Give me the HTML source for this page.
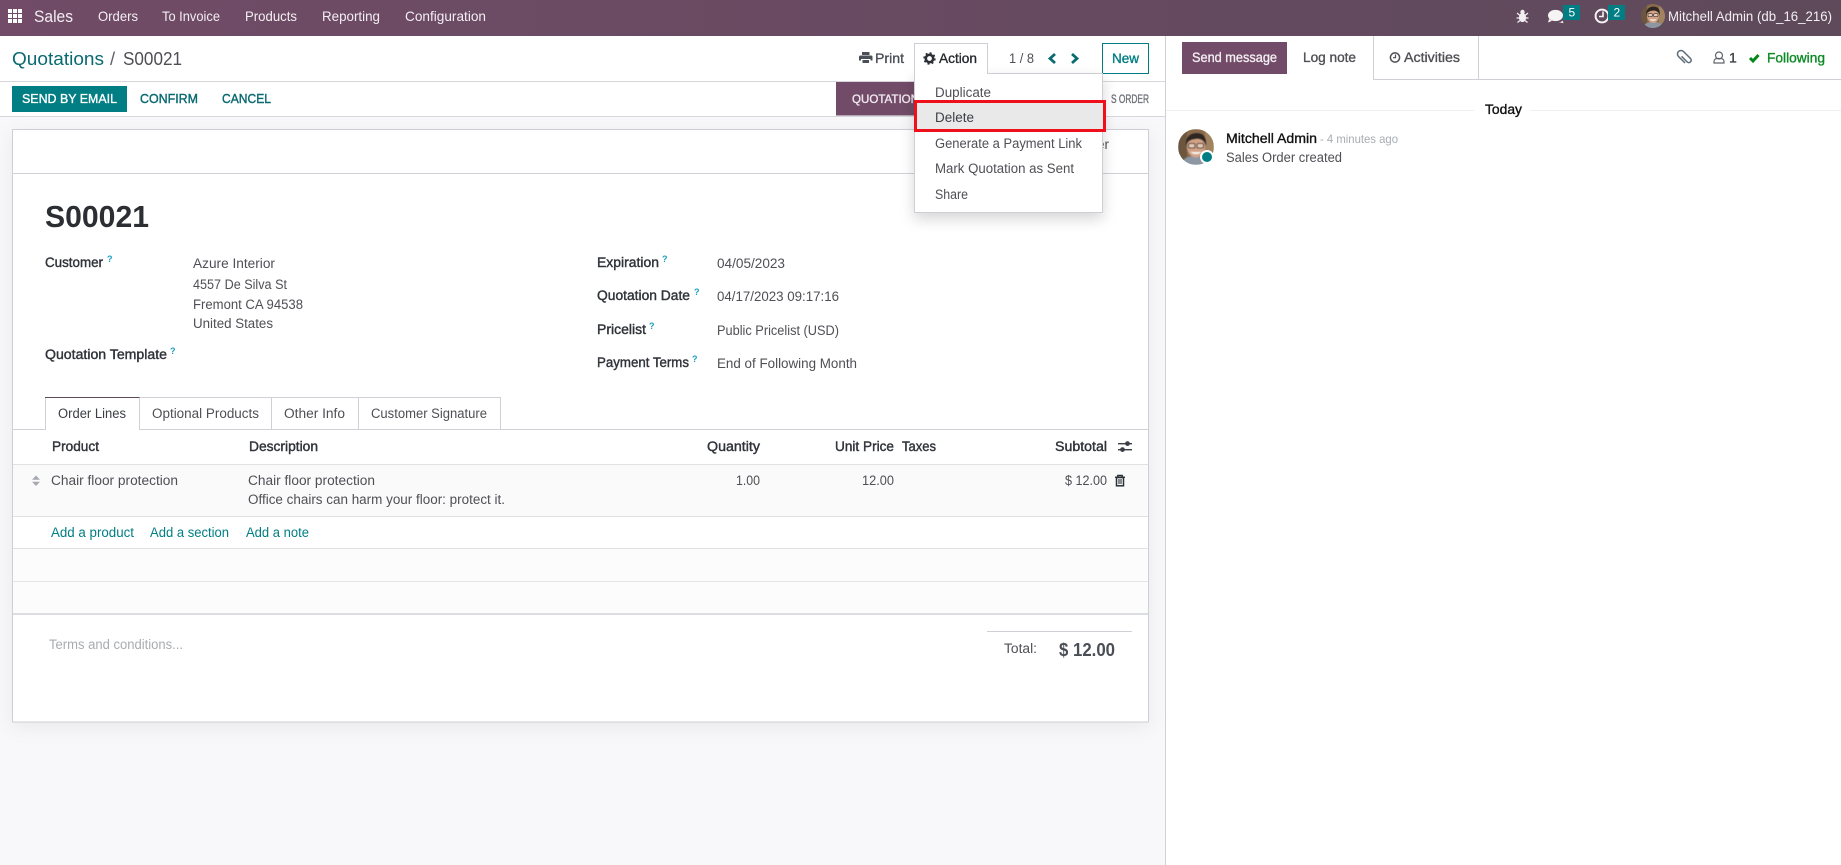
<!DOCTYPE html>
<html lang="en"><head><meta charset="utf-8"><title>S00021</title>
<style>
html,body{margin:0;padding:0;background:#fff;width:1841px;height:865px;overflow:hidden}
svg{display:block}
text{font-family:"Liberation Sans",sans-serif;font-size:13.5px;fill:#4f4f55;white-space:pre}
.nav{fill:#f3eef2;font-size:14px}
.b{fill:#30343a;stroke:#30343a;stroke-width:.4px}
.m{stroke-width:.35px}
.teal{fill:#017e84}
.tb{fill:#0a6a72;stroke:#0a6a72;stroke-width:.4px}
.q{font-size:9px;fill:#1a9fc0;font-weight:bold}
</style></head><body>
<svg width="1841" height="865" viewBox="0 0 1841 865" xmlns="http://www.w3.org/2000/svg">
<defs>
<linearGradient id="g" x1="0" x2="1" y1="0" y2="0"><stop offset="0" stop-color="#714b67"/><stop offset="1" stop-color="#5e4a5b"/></linearGradient>
<filter id="sh" x="-20%" y="-20%" width="140%" height="140%"><feDropShadow dx="0" dy="6" stdDeviation="7" flood-color="#000" flood-opacity=".16"/></filter>
<filter id="sh2" x="-5%" y="-5%" width="110%" height="110%"><feDropShadow dx="0" dy="5" stdDeviation="9" flood-color="#000" flood-opacity=".06"/></filter>
<filter id="bl"><feGaussianBlur stdDeviation=".55"/></filter>
<clipPath id="av"><circle cx="18" cy="18" r="18"/></clipPath>
<symbol id="face" viewBox="0 0 36 36">
<g clip-path="url(#av)"><g filter="url(#bl)">
<rect width="36" height="36" fill="#8a6a4c"/>
<rect x="0" y="0" width="9" height="36" fill="#6d5640"/>
<rect x="27" y="0" width="9" height="36" fill="#a2835f"/>
<path d="M3 36 C5 28 12 27 18 27 C25 27 31 28 33 36Z" fill="#8d97a3"/>
<ellipse cx="18" cy="17.5" rx="9" ry="11" fill="#d3a286"/>
<path d="M8 17 C7 7 13 4 19 4 C26 4 29 9 28 17 C26 11 22 9.5 18 10 C14 10.5 10 11 8 17Z" fill="#2e2620"/>
<rect x="10.5" y="14.5" width="6.5" height="4.5" rx="1.5" fill="#e3c9b8" stroke="#38302a" stroke-width="1"/>
<rect x="19" y="14.5" width="6.5" height="4.5" rx="1.5" fill="#e3c9b8" stroke="#38302a" stroke-width="1"/>
<path d="M12.5 23 C15 26 21 26 23.5 23Z" fill="#f6efe9"/>
</g></g></symbol>
</defs>

<!-- base -->
<rect width="1841" height="865" fill="#f8f8fb"/>
<rect x="0" y="36" width="1165" height="80" fill="#fff"/>
<rect x="1166" y="36" width="675" height="829" fill="#fff"/>
<rect x="0" y="0" width="1841" height="36" fill="url(#g)"/>
<rect x="0" y="81" width="1165" height="1" fill="#d5d7da"/>
<rect x="0" y="116" width="1165" height="1" fill="#d5d7da"/>
<rect x="1165" y="36" width="1" height="829" fill="#cfd1d6"/>

<!-- navbar -->
<g fill="#fff">
<rect x="8" y="9" width="4" height="4"/><rect x="13" y="9" width="4" height="4"/><rect x="18" y="9" width="4" height="4"/>
<rect x="8" y="14" width="4" height="4"/><rect x="13" y="14" width="4" height="4"/><rect x="18" y="14" width="4" height="4"/>
<rect x="8" y="19" width="4" height="4"/><rect x="13" y="19" width="4" height="4"/><rect x="18" y="19" width="4" height="4"/>
</g>
<text class="nav" x="34" y="22" style="font-size:17px" textLength="39" lengthAdjust="spacingAndGlyphs">Sales</text>
<text class="nav" x="98" y="21" textLength="40" lengthAdjust="spacingAndGlyphs">Orders</text>
<text class="nav" x="162" y="21" textLength="58" lengthAdjust="spacingAndGlyphs">To Invoice</text>
<text class="nav" x="245" y="21" textLength="52" lengthAdjust="spacingAndGlyphs">Products</text>
<text class="nav" x="322" y="21" textLength="58" lengthAdjust="spacingAndGlyphs">Reporting</text>
<text class="nav" x="405" y="21" textLength="81" lengthAdjust="spacingAndGlyphs">Configuration</text>

<!-- bug -->
<g fill="#f2eef1" stroke="#f2eef1">
<ellipse cx="1522.5" cy="17.5" rx="3.6" ry="4.6" stroke="none"/>
<circle cx="1522.5" cy="12" r="2.2" stroke="none"/>
<path d="M1517 13l3 2.5M1528 13l-3 2.5M1516.5 18h3M1528.5 18h-3M1517.5 22.5l2.5-2M1527.5 22.5l-2.5-2" fill="none" stroke-width="1.2"/>
</g>
<!-- comments -->
<ellipse cx="1555.5" cy="15.5" rx="7.5" ry="5.6" fill="#f6f3f5"/>
<path d="M1549 19l-1 3.5 4-1.6Z" fill="#f6f3f5"/>
<path d="M1557 22.5c2.5.2 4.5-.5 5.5-2l1 2.8-3.2-.8Z" fill="#f6f3f5"/>
<rect x="1563" y="5" width="17" height="15" fill="#017e84"/>
<text x="1568.5" y="16.5" style="font-size:12px;fill:#fff">5</text>
<!-- clock -->
<circle cx="1602" cy="16" r="6.4" fill="none" stroke="#f6f3f5" stroke-width="2"/>
<path d="M1603 11.5v5h-4" fill="none" stroke="#f6f3f5" stroke-width="1.6"/>
<rect x="1608" y="5" width="17" height="15" fill="#017e84"/>
<text x="1613.5" y="16.5" style="font-size:12px;fill:#fff">2</text>
<!-- user -->
<use href="#face" x="1641" y="4" width="24" height="24"/>
<text class="nav" x="1668" y="21" textLength="164" lengthAdjust="spacingAndGlyphs">Mitchell Admin (db_16_216)</text>

<!-- control panel -->
<text x="12" y="65" style="font-size:18.5px;fill:#0a6a72" textLength="92" lengthAdjust="spacingAndGlyphs">Quotations</text>
<text x="110" y="65" style="font-size:18.5px;fill:#5f6368">/</text>
<text x="123" y="65" style="font-size:18.5px;fill:#4f4f55" textLength="59" lengthAdjust="spacingAndGlyphs">S00021</text>

<path d="M862 52h7.5v3h-7.5Z M860.5 55.5h10.5a1.5 1.5 0 0 1 1.5 1.5v3.5h-2v-1.5h-9.5v1.5h-2v-3.5a1.5 1.5 0 0 1 1.5-1.5Z M862.5 60h6.5v3h-6.5Z" fill="#4a4f57"/>
<text class="m" x="875" y="63" style="fill:#4a4f57;stroke:#4a4f57;font-size:14px" textLength="29" lengthAdjust="spacingAndGlyphs">Print</text>

<text x="1009" y="63" textLength="25" lengthAdjust="spacingAndGlyphs">1 / 8</text>
<path d="M1055 54l-5 4.5 5 4.5" fill="none" stroke="#0a6a72" stroke-width="2.8"/>
<path d="M1072 54l5 4.5-5 4.5" fill="none" stroke="#0a6a72" stroke-width="2.8"/>
<rect x="1102.5" y="43.5" width="46" height="30" fill="#fff" stroke="#017e84"/>
<text class="m" x="1112" y="63" style="fill:#017e84;stroke:#017e84" textLength="27" lengthAdjust="spacingAndGlyphs">New</text>

<!-- action row -->
<rect x="12" y="86" width="115" height="26" fill="#017e84"/>
<text class="m" x="22" y="103" style="fill:#fff;stroke:#fff;font-size:13px" textLength="95" lengthAdjust="spacingAndGlyphs">SEND BY EMAIL</text>
<text class="tb" x="140" y="103" style="font-size:13px" textLength="58" lengthAdjust="spacingAndGlyphs">CONFIRM</text>
<text class="tb" x="222" y="103" style="font-size:13px" textLength="49" lengthAdjust="spacingAndGlyphs">CANCEL</text>

<!-- status -->
<rect x="836" y="82" width="110" height="33.5" fill="#714b67"/>
<text class="m" x="852" y="103" style="fill:#f1e9ef;stroke:#f1e9ef;font-size:11.5px" textLength="67" lengthAdjust="spacingAndGlyphs">QUOTATION</text>
<text class="m" x="1111" y="103" style="fill:#6c7077;stroke:#6c7077;font-size:11.5px" textLength="38" lengthAdjust="spacingAndGlyphs">S ORDER</text>

<!-- sheet -->
<rect x="12.5" y="129.5" width="1136" height="592.5" fill="#fff" stroke="#cdcfd4" filter="url(#sh2)"/>
<rect x="13" y="173" width="1135" height="1" fill="#cfd1d6"/>
<text x="1097" y="149" style="font-size:14px" textLength="12" lengthAdjust="spacingAndGlyphs">er</text>

<text x="45" y="227" style="font-size:31px;font-weight:bold;fill:#2b2f33" textLength="104" lengthAdjust="spacingAndGlyphs">S00021</text>

<text class="b" x="45" y="267" textLength="58" lengthAdjust="spacingAndGlyphs">Customer</text>
<text class="q" x="107" y="262">?</text>
<text x="193" y="268" textLength="82" lengthAdjust="spacingAndGlyphs">Azure Interior</text>
<text x="193" y="289" textLength="94" lengthAdjust="spacingAndGlyphs">4557 De Silva St</text>
<text x="193" y="309" textLength="110" lengthAdjust="spacingAndGlyphs">Fremont CA 94538</text>
<text x="193" y="328" textLength="80" lengthAdjust="spacingAndGlyphs">United States</text>
<text class="b" x="45" y="359" textLength="122" lengthAdjust="spacingAndGlyphs">Quotation Template</text>
<text class="q" x="170" y="354">?</text>

<text class="b" x="597" y="267" textLength="62" lengthAdjust="spacingAndGlyphs">Expiration</text>
<text class="q" x="662" y="262">?</text>
<text x="717" y="268" textLength="68" lengthAdjust="spacingAndGlyphs">04/05/2023</text>
<text class="b" x="597" y="300" textLength="93" lengthAdjust="spacingAndGlyphs">Quotation Date</text>
<text class="q" x="694" y="295">?</text>
<text x="717" y="301" textLength="122" lengthAdjust="spacingAndGlyphs">04/17/2023 09:17:16</text>
<text class="b" x="597" y="334" textLength="49" lengthAdjust="spacingAndGlyphs">Pricelist</text>
<text class="q" x="649" y="329">?</text>
<text x="717" y="335" textLength="122" lengthAdjust="spacingAndGlyphs">Public Pricelist (USD)</text>
<text class="b" x="597" y="367" textLength="92" lengthAdjust="spacingAndGlyphs">Payment Terms</text>
<text class="q" x="692" y="362">?</text>
<text x="717" y="368" textLength="140" lengthAdjust="spacingAndGlyphs">End of Following Month</text>

<!-- tabs -->
<rect x="13" y="429" width="1135" height="1" fill="#cfd1d6"/>
<path d="M45.5 430V397.5H139.5V430" fill="#fff" stroke="#cfd1d6"/>
<rect x="46" y="429" width="93" height="2" fill="#fff"/>
<rect x="45" y="397" width="95" height="1" fill="#5f4a5b"/>
<path d="M139.5 397.5H500.5V429.5M271.5 397.5V429.5M358.5 397.5V429.5" fill="none" stroke="#cfd1d6"/>
<text x="58" y="418" style="fill:#3b3f45" textLength="68" lengthAdjust="spacingAndGlyphs">Order Lines</text>
<text x="152" y="418" textLength="107" lengthAdjust="spacingAndGlyphs">Optional Products</text>
<text x="284" y="418" textLength="61" lengthAdjust="spacingAndGlyphs">Other Info</text>
<text x="371" y="418" textLength="116" lengthAdjust="spacingAndGlyphs">Customer Signature</text>

<!-- table -->
<rect x="13" y="465" width="1135" height="51" fill="#fafafa"/>
<rect x="13" y="549" width="1135" height="64" fill="#fcfcfc"/>
<rect x="13" y="464" width="1135" height="1" fill="#dfe1e5"/>
<rect x="13" y="516" width="1135" height="1" fill="#dfe1e5"/>
<rect x="13" y="548" width="1135" height="1" fill="#dfe1e5"/>
<rect x="13" y="581" width="1135" height="1" fill="#e4e5e8"/>
<rect x="13" y="613" width="1135" height="2" fill="#dcdde1"/>

<text class="b" x="52" y="451" textLength="47" lengthAdjust="spacingAndGlyphs">Product</text>
<text class="b" x="249" y="451" textLength="69" lengthAdjust="spacingAndGlyphs">Description</text>
<text class="b" x="707" y="451" textLength="53" lengthAdjust="spacingAndGlyphs">Quantity</text>
<text class="b" x="835" y="451" textLength="59" lengthAdjust="spacingAndGlyphs">Unit Price</text>
<text class="b" x="902" y="451" textLength="34" lengthAdjust="spacingAndGlyphs">Taxes</text>
<text class="b" x="1055" y="451" textLength="52" lengthAdjust="spacingAndGlyphs">Subtotal</text>
<g fill="#3b3f45">
<rect x="1118" y="443" width="14" height="1.4"/><rect x="1118" y="449" width="14" height="1.4"/>
<circle cx="1127.5" cy="443.6" r="2.4"/><circle cx="1122.5" cy="449.6" r="2.4"/>
</g>

<path d="M36 475.5l4 4.2h-8Z M36 486l4-4.2h-8Z" fill="#a5a9af"/>
<text x="51" y="485" textLength="127" lengthAdjust="spacingAndGlyphs">Chair floor protection</text>
<text x="248" y="485" textLength="127" lengthAdjust="spacingAndGlyphs">Chair floor protection</text>
<text x="248" y="504" textLength="257" lengthAdjust="spacingAndGlyphs">Office chairs can harm your floor: protect it.</text>
<text x="736" y="485" textLength="24" lengthAdjust="spacingAndGlyphs">1.00</text>
<text x="862" y="485" textLength="32" lengthAdjust="spacingAndGlyphs">12.00</text>
<text x="1065" y="485" textLength="42" lengthAdjust="spacingAndGlyphs">$ 12.00</text>
<path d="M1115 477.2h10M1117.8 477v-1.6h4.4v1.6" fill="none" stroke="#2b2f36" stroke-width="1.4"/>
<rect x="1116.5" y="477.5" width="7" height="8.3" fill="none" stroke="#2b2f36" stroke-width="1.5"/>
<path d="M1119 479v5M1121 479v5" stroke="#2b2f36" stroke-width="1.1"/>

<text class="teal" x="51" y="537" textLength="83" lengthAdjust="spacingAndGlyphs">Add a product</text>
<text class="teal" x="150" y="537" textLength="79" lengthAdjust="spacingAndGlyphs">Add a section</text>
<text class="teal" x="246" y="537" textLength="63" lengthAdjust="spacingAndGlyphs">Add a note</text>

<text x="49" y="649" style="fill:#a8acb1" textLength="134" lengthAdjust="spacingAndGlyphs">Terms and conditions...</text>
<rect x="987" y="631" width="145" height="1" fill="#cfd1d6"/>
<text x="1004" y="653" textLength="33" lengthAdjust="spacingAndGlyphs">Total:</text>
<text x="1059" y="656" style="font-size:18px;font-weight:bold;fill:#4a4e55" textLength="56" lengthAdjust="spacingAndGlyphs">$ 12.00</text>

<!-- dropdown -->
<rect x="914.5" y="73.5" width="188" height="139" fill="#fff" stroke="#cdcfd4" filter="url(#sh)"/>
<path d="M914.5 73.5V43.5H987.5V73.5" fill="#fff" stroke="#cdcfd4"/>
<rect x="915" y="72" width="72" height="3" fill="#fff"/>
<circle cx="929.5" cy="58.5" r="3.7" fill="none" stroke="#2b2f36" stroke-width="2.6"/>
<circle cx="929.5" cy="58.5" r="5.4" fill="none" stroke="#2b2f36" stroke-width="1.6" stroke-dasharray="2 2.24"/>
<text class="m" x="939" y="63" style="font-size:14px;fill:#262a30;stroke:#262a30" textLength="38" lengthAdjust="spacingAndGlyphs">Action</text>
<text x="935" y="97" textLength="56" lengthAdjust="spacingAndGlyphs">Duplicate</text>
<rect x="915.5" y="101.5" width="189" height="29" fill="#e9e9e9" stroke="#f0101c" stroke-width="3"/>
<text x="935" y="122" style="fill:#3b3f45" textLength="39" lengthAdjust="spacingAndGlyphs">Delete</text>
<text x="935" y="148" textLength="147" lengthAdjust="spacingAndGlyphs">Generate a Payment Link</text>
<text x="935" y="173" textLength="139" lengthAdjust="spacingAndGlyphs">Mark Quotation as Sent</text>
<text x="935" y="199" textLength="33" lengthAdjust="spacingAndGlyphs">Share</text>

<!-- chatter top -->
<rect x="1182" y="42" width="105" height="32" fill="#714b67"/>
<text class="m" x="1192" y="62" style="fill:#f3eef2;stroke:#f3eef2" textLength="85" lengthAdjust="spacingAndGlyphs">Send message</text>
<text class="m" x="1303" y="62" style="fill:#4f4f55;stroke:#4f4f55" textLength="53" lengthAdjust="spacingAndGlyphs">Log note</text>
<path d="M1373.5 36V79.5H1841M1478.5 36V79.5" fill="none" stroke="#cfd1d6"/>
<circle cx="1395" cy="57.5" r="4.6" fill="none" stroke="#4f4f55" stroke-width="1.5"/>
<path d="M1395.5 54.5v3.2h-2.5" fill="none" stroke="#4f4f55" stroke-width="1.2"/>
<text class="m" x="1404" y="62" style="fill:#4f4f55;stroke:#4f4f55" textLength="56" lengthAdjust="spacingAndGlyphs">Activities</text>

<path d="M1685 63L1678.5 56.5a3.5 3.5 0 0 1 5-5L1690.5 58.5a2.4 2.4 0 0 1-3.4 3.4L1681.5 56.3" fill="none" stroke="#5b6b78" stroke-width="1.5"/>
<circle cx="1719" cy="55.5" r="3.5" fill="none" stroke="#5f646b" stroke-width="1.2"/>
<path d="M1714 63v-1.5a3 3 0 0 1 3-3h4a3 3 0 0 1 3 3v1.5Z" fill="none" stroke="#5f646b" stroke-width="1.2"/>
<text class="m" x="1729" y="62.5" style="font-size:14px;fill:#3b3f45;stroke:#3b3f45">1</text>
<path d="M1750 58l3 3 5.5-6" fill="none" stroke="#008818" stroke-width="3"/>
<text class="m" x="1767" y="62.5" style="fill:#0c8a24;stroke:#0c8a24" textLength="58" lengthAdjust="spacingAndGlyphs">Following</text>

<!-- chatter body -->
<rect x="1166" y="110" width="308" height="1" fill="#eef0f2"/>
<rect x="1530" y="110" width="311" height="1" fill="#eef0f2"/>
<text class="m" x="1485" y="114" style="fill:#111;stroke:#111" textLength="37" lengthAdjust="spacingAndGlyphs">Today</text>
<use href="#face" x="1178" y="129" width="36" height="36"/>
<circle cx="1207" cy="157" r="7" fill="#fff"/>
<circle cx="1207" cy="157" r="5" fill="#017e84"/>
<text class="m" x="1226" y="143" style="fill:#111;stroke:#111" textLength="91" lengthAdjust="spacingAndGlyphs">Mitchell Admin</text>
<text x="1320" y="143" style="font-size:12px;fill:#a8acb1" textLength="78" lengthAdjust="spacingAndGlyphs">- 4 minutes ago</text>
<text x="1226" y="162" textLength="116" lengthAdjust="spacingAndGlyphs">Sales Order created</text>
</svg>
</body></html>
